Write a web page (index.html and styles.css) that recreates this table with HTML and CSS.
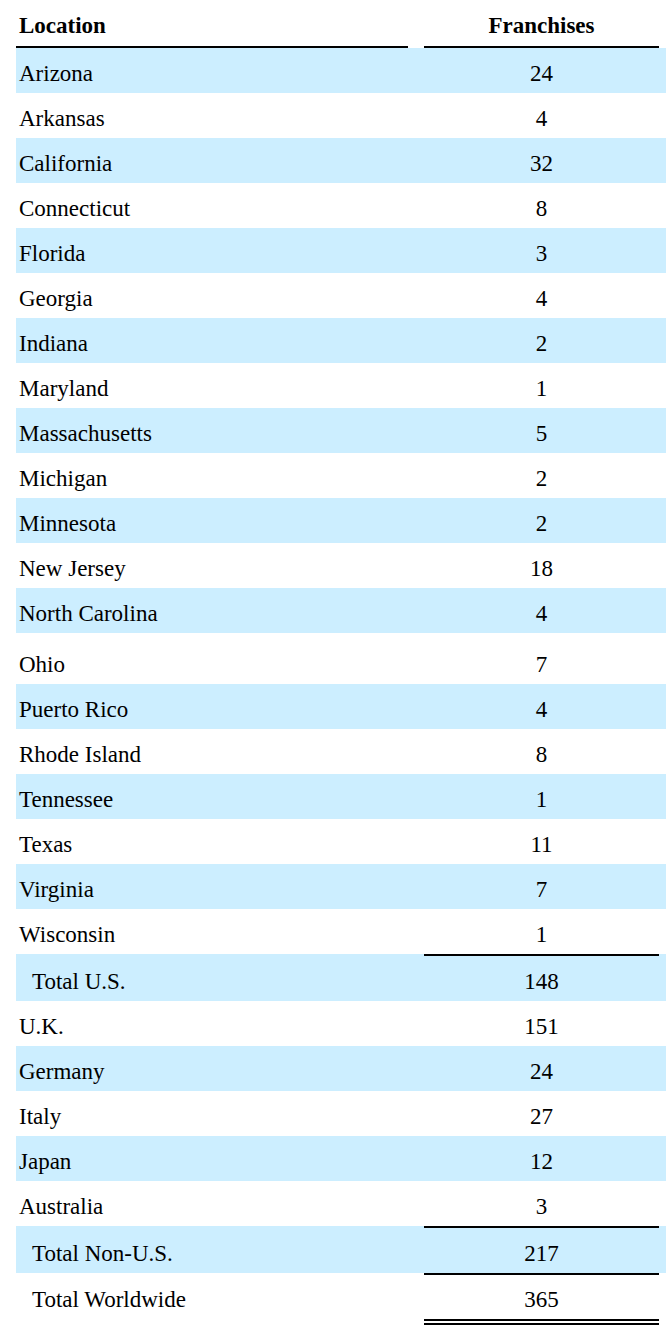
FILE: index.html
```html
<!DOCTYPE html>
<html lang="en">
<head>
<meta charset="utf-8">
<title>Franchises by Location</title>
<link rel="stylesheet" href="styles.css">
</head>
<body>
<div class="table">
  <div class="row head"><div class="loc">Location</div><div class="num">Franchises</div></div>
  <div class="row alt"><div class="loc">Arizona</div><div class="num">24</div></div>
  <div class="row"><div class="loc">Arkansas</div><div class="num">4</div></div>
  <div class="row alt"><div class="loc">California</div><div class="num">32</div></div>
  <div class="row"><div class="loc">Connecticut</div><div class="num">8</div></div>
  <div class="row alt"><div class="loc">Florida</div><div class="num">3</div></div>
  <div class="row"><div class="loc">Georgia</div><div class="num">4</div></div>
  <div class="row alt"><div class="loc">Indiana</div><div class="num">2</div></div>
  <div class="row"><div class="loc">Maryland</div><div class="num">1</div></div>
  <div class="row alt"><div class="loc">Massachusetts</div><div class="num">5</div></div>
  <div class="row"><div class="loc">Michigan</div><div class="num">2</div></div>
  <div class="row alt"><div class="loc">Minnesota</div><div class="num">2</div></div>
  <div class="row"><div class="loc">New Jersey</div><div class="num">18</div></div>
  <div class="row alt"><div class="loc">North Carolina</div><div class="num">4</div></div>
  <div class="row tall"><div class="loc">Ohio</div><div class="num">7</div></div>
  <div class="row alt"><div class="loc">Puerto Rico</div><div class="num">4</div></div>
  <div class="row"><div class="loc">Rhode Island</div><div class="num">8</div></div>
  <div class="row alt"><div class="loc">Tennessee</div><div class="num">1</div></div>
  <div class="row"><div class="loc">Texas</div><div class="num">11</div></div>
  <div class="row alt"><div class="loc">Virginia</div><div class="num">7</div></div>
  <div class="row"><div class="loc">Wisconsin</div><div class="num">1</div></div>
  <div class="row alt total"><div class="loc">Total U.S.</div><div class="num">148</div></div>
  <div class="row"><div class="loc">U.K.</div><div class="num">151</div></div>
  <div class="row alt"><div class="loc">Germany</div><div class="num">24</div></div>
  <div class="row"><div class="loc">Italy</div><div class="num">27</div></div>
  <div class="row alt"><div class="loc">Japan</div><div class="num">12</div></div>
  <div class="row"><div class="loc">Australia</div><div class="num">3</div></div>
  <div class="row alt total"><div class="loc">Total Non-U.S.</div><div class="num">217</div></div>
  <div class="row total grand"><div class="loc">Total Worldwide</div><div class="num">365</div></div>
</div>
</body>
</html>
```

FILE: styles.css
```css
* { box-sizing: border-box; }

body {
  margin: 0;
  background: #ffffff;
  color: #000000;
  font-family: "Liberation Serif", "Times New Roman", serif;
  font-size: 23px;
}

.table {
  margin-left: 16px;
  width: 650px;
  display: flex;
  flex-direction: column;
}

.row {
  display: flex;
  align-items: stretch;
}

.row.alt { background: #cceeff; }

.loc,
.num {
  padding-top: 7px;
  padding-bottom: 1px;
  line-height: 37px;
  white-space: nowrap;
}

.loc {
  width: 392px;
  margin-right: 8px;
  padding-left: 3px;
}

.num {
  flex: 1;
  margin: 0 7px 0 8px;
  text-align: center;
}

.head .loc,
.head .num {
  font-weight: bold;
  padding-top: 7px;
  padding-bottom: 2px;
  border-bottom: 2px solid #000;
}

.tall .loc,
.tall .num {
  padding-top: 13px;
}

.total .loc {
  padding-left: 16px;
  border-top: 2px solid transparent;
}

.total .num { border-top: 2px solid #000; }

.grand .loc,
.grand .num { line-height: 36px; }

.grand .num { border-bottom: 6px double #000; }
```
